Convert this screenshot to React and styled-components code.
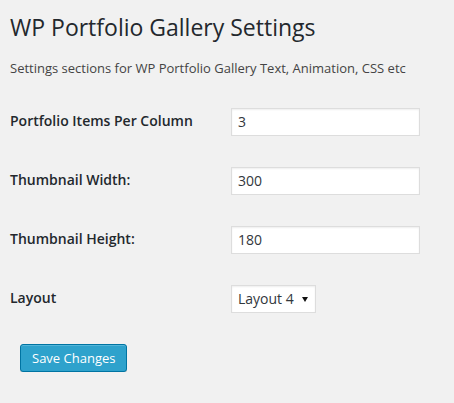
import React from "react";
import styled, { createGlobalStyle } from "styled-components";

const GlobalStyle = createGlobalStyle`
  html, body {
    margin: 0;
    padding: 0;
    background: #f1f1f1;
  }
  body {
    font-family: "Open Sans", "Liberation Sans", sans-serif;
    color: #444;
  }
`;

const Wrap = styled.div`
  padding: 13px 10px 0 10px;
  display: flex;
  flex-direction: column;
  align-items: flex-start;
`;

const Title = styled.h1`
  margin: 0;
  font-size: 23px;
  font-weight: 400;
  line-height: 29px;
  color: #23282d;
`;

const Description = styled.p`
  margin: 17px 0 0 0;
  font-size: 13px;
  line-height: 19.5px;
  color: #444;
`;

const FormTable = styled.div`
  margin-top: 29px;
  display: grid;
  grid-template-columns: 221px auto;
  grid-auto-rows: 28px;
  row-gap: 31px;
  align-items: center;
`;

const Label = styled.label`
  font-size: 14px;
  font-weight: 600;
  color: #23282d;
  line-height: 1.3;
`;

const TextInput = styled.input`
  box-sizing: border-box;
  width: 189px;
  height: 28px;
  margin: 0;
  padding: 3px 6px;
  border: 1px solid #ddd;
  background: #fff;
  box-shadow: inset 0 1px 2px rgba(0, 0, 0, 0.07);
  font-family: "Open Sans", "Liberation Sans", sans-serif;
  font-size: 14px;
  color: #32373c;
  outline: none;
`;

const SelectBox = styled.div`
  position: relative;
  width: 85px;
  height: 28px;
`;

const Select = styled.select`
  appearance: none;
  -webkit-appearance: none;
  box-sizing: border-box;
  width: 100%;
  height: 28px;
  margin: 0;
  padding: 0 20px 0 6px;
  border: 1px solid #ddd;
  border-radius: 0;
  background: #fff;
  box-shadow: inset 0 1px 2px rgba(0, 0, 0, 0.07);
  font-family: "Open Sans", "Liberation Sans", sans-serif;
  font-size: 14px;
  color: #32373c;
  outline: none;
`;

const Arrow = styled.svg`
  position: absolute;
  right: 8px;
  top: 12px;
  pointer-events: none;
`;

const SubmitRow = styled.div`
  margin: 31px 0 0 10px;
`;

const PrimaryButton = styled.button`
  box-sizing: border-box;
  height: 28px;
  padding: 0 11px 2px;
  border: 1px solid #0074a2;
  border-radius: 3px;
  background: #2ea2cc;
  box-shadow: inset 0 1px 0 rgba(120, 200, 230, 0.5), 0 1px 0 rgba(0, 0, 0, 0.15);
  color: #fff;
  font-family: "Open Sans", "Liberation Sans", sans-serif;
  font-size: 13px;
  line-height: 26px;
  cursor: pointer;
`;

const fields = [
  { id: "items", label: "Portfolio Items Per Column", value: "3" },
  { id: "width", label: "Thumbnail Width:", value: "300" },
  { id: "height", label: "Thumbnail Height:", value: "180" },
];

export default function App() {
  return (
    <>
      <GlobalStyle />
      <Wrap>
        <Title>WP Portfolio Gallery Settings</Title>
        <Description>
          Settings sections for WP Portfolio Gallery Text, Animation, CSS etc
        </Description>
        <FormTable>
          {fields.map((f) => (
            <React.Fragment key={f.id}>
              <Label htmlFor={f.id}>{f.label}</Label>
              <TextInput id={f.id} type="text" defaultValue={f.value} />
            </React.Fragment>
          ))}
          <Label htmlFor="layout">Layout</Label>
          <SelectBox>
            <Select id="layout" defaultValue="4">
              <option value="1">Layout 1</option>
              <option value="2">Layout 2</option>
              <option value="3">Layout 3</option>
              <option value="4">Layout 4</option>
            </Select>
            <Arrow width="6" height="5" viewBox="0 0 6 5">
              <path d="M0 0 H6 L3 5 Z" fill="#111" />
            </Arrow>
          </SelectBox>
        </FormTable>
        <SubmitRow>
          <PrimaryButton type="button">Save Changes</PrimaryButton>
        </SubmitRow>
      </Wrap>
    </>
  );
}
